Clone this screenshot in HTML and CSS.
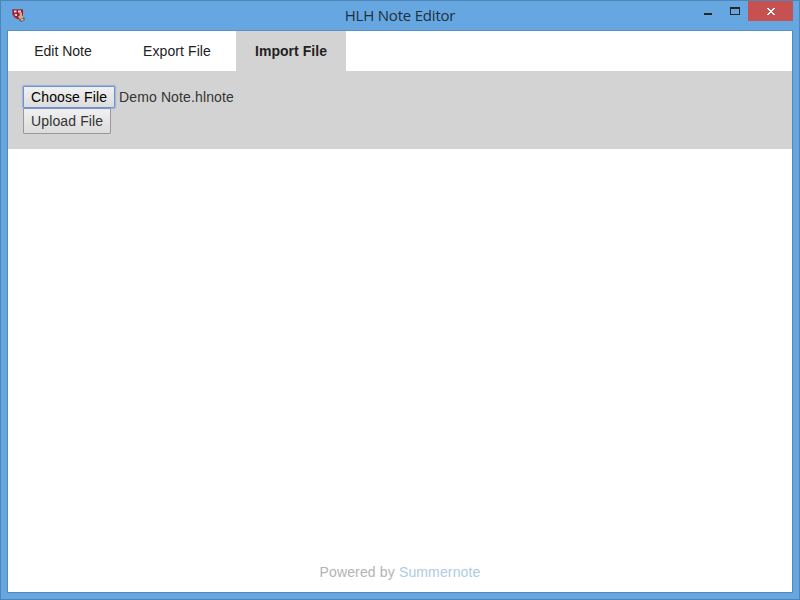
FILE: index.html
```html
<!DOCTYPE html>
<html lang="en">
<head>
<meta charset="utf-8">
<title>HLH Note Editor</title>
<link rel="stylesheet" href="styles.css">
</head>
<body>
<div class="window">
  <header class="titlebar">
    <svg class="app-icon" width="14" height="14" viewBox="0 0 14 14">
      <path d="M0 1H11V7Q9 10.500 6 11.500Q1 9.500 0 5Z" fill="#a9152a"/>
      <path d="M0 1H11V2H1V5Q2 8.500 6 10.500V11.500Q1 9.500 0 5Z" fill="#86506a"/>
      <path d="M2 2.500h2.500v2H2zM6 2.500h3v2H6zM2.500 6H5v2H3.500z" fill="#e9dcdf"/>
      <path d="M7.500 5L9 4L10 5V8L12 10L11 12L9 12L7 10L6 8L7.500 8Z" fill="#d0ab87"/>
      <path d="M7 11L9 11L12 9L13 11L12 13L9 14L7.500 13Z" fill="#6b6656"/>
      <path d="M9 11h2.500v1.500H9z" fill="#c3bda8"/>
    </svg>
    <h1 class="title">HLH Note Editor</h1>
    <div class="controls">
      <svg class="control minimize" width="28" height="20" viewBox="0 0 28 20" shape-rendering="crispEdges"><path d="M9 12h8v2H9z" fill="#262626"/></svg>
      <svg class="control maximize" width="25" height="20" viewBox="0 0 25 20" shape-rendering="crispEdges"><path d="M7 6h10v8H7zM8 8v5h8V8z" fill="#262626" fill-rule="evenodd"/></svg>
      <svg class="control close" width="45" height="20" viewBox="0 0 45 20" shape-rendering="crispEdges"><path d="M19 7h2v1h1v1h2v-1h1v-1h2v1h-1v1h-1v1h-1v1h1v1h1v1h1v1h-2v-1h-1v-1h-2v1h-1v1h-2v-1h1v-1h1v-1h1v-1h-1v-1h-1v-1h-1z" fill="#fff"/></svg>
    </div>
  </header>
  <main class="client">
    <nav class="tabs">
      <a class="tab">Edit Note</a>
      <a class="tab export">Export File</a>
      <a class="tab active">Import File</a>
    </nav>
    <section class="panel">
      <div class="file-row"><button class="button focused">Choose File</button><span class="filename">Demo Note.hlnote</span></div>
      <button class="button upload">Upload File</button>
    </section>
    <footer class="footer">Powered by <a class="link">Summernote</a></footer>
  </main>
</div>
</body>
</html>
```
FILE: styles.css
```css
* { box-sizing: border-box; }
body {
  margin: 0;
  font: 14px/20px "Liberation Sans", Arial, sans-serif;
  color: #333;
}
.window {
  display: flex;
  flex-direction: column;
  width: 800px;
  height: 600px;
  padding: 0 6px 6px;
  border: 1px solid #4f86b8;
  background: #66a7e1;
}
.titlebar {
  display: grid;
  grid-template-columns: 1fr auto 1fr;
  height: 29px;
  flex: none;
}
.app-icon { margin: 7px 0 0 5px; }
.title {
  margin: 4px 0 0;
  font: 400 15px/20px "Open Sans", "Noto Sans", sans-serif;
  letter-spacing: -0.2px;
  color: #1f2f3d;
}
.controls {
  display: flex;
  justify-content: flex-end;
}
.control { display: block; flex: none; }
.close { background: #c75050; }
.client {
  display: flex;
  flex-direction: column;
  flex: 1;
  border: 1px solid #5488b7;
  border-top-color: #5b90c8;
  background: #fff;
}
.tabs { display: flex; height: 40px; }
.tab {
  width: 110px;
  padding: 10px 0;
  text-align: center;
  color: #222;
}
.export { width: 118px; letter-spacing: 0.08px; }
.active { background: #d3d3d3; font-weight: 700; letter-spacing: 0.05px; }
.panel {
  height: 78px;
  padding: 15px;
  background: #d3d3d3;
  letter-spacing: 0.13px;
}
.file-row { display: flex; height: 22px; }
.button {
  display: block;
  height: 22px;
  width: 92px;
  padding: 0 0 0 7px;
  border: 1px solid #999;
  border-radius: 1px;
  background: linear-gradient(#f1f1f1, #dcdcdc);
  font: inherit;
  letter-spacing: inherit;
  text-align: left;
  color: #333;
}
.focused {
  border-color: #7092d4;
  box-shadow: 0 0 1px 1px rgba(109, 146, 221, .5);
  position: relative;
  color: #000;
}
.upload { width: 88px; height: 26px; }
.filename { margin-left: 4px; line-height: 22px; }
.footer {
  margin-top: auto;
  padding-bottom: 10px;
  text-align: center;
  letter-spacing: 0.14px;
  color: #b3b3b3;
}
.link { color: #accbe5; }
```
